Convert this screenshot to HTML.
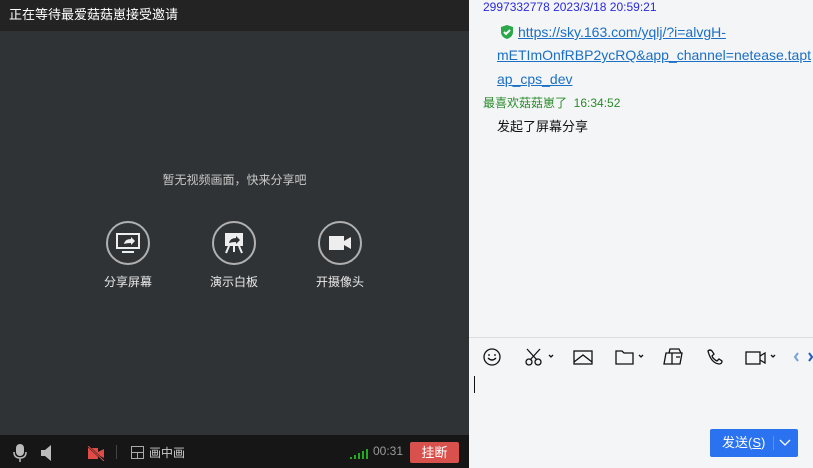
<!DOCTYPE html>
<html><head><meta charset="utf-8"><style>
*{margin:0;padding:0;box-sizing:border-box}
body{width:813px;height:468px;overflow:hidden;position:relative;font-family:"Liberation Sans","Noto Sans CJK SC",sans-serif;background:#f4f5f7}
.l{position:absolute;left:0;top:0;width:469px;height:468px;background:#303336}
.t{position:absolute;left:0;top:0;width:469px;height:31px;background:#232323;color:#fff;font-size:13px;line-height:30px;padding-left:9px}
.hint{position:absolute;top:171px;left:0;width:469px;text-align:center;color:#c8c8c8;font-size:12px}
.b{position:absolute;top:221px;width:60px;text-align:center;color:#e8e8e8;font-size:12px}
.c{width:44px;height:44px;border:2px solid #b0b0b0;border-radius:50%;margin:0 auto 8px;display:flex;align-items:center;justify-content:center}
.bot{position:absolute;left:0;top:435px;width:469px;height:33px;background:#161616;color:#ccc;font-size:12px}
.r{position:absolute;left:469px;top:0;width:344px;height:468px;font-size:13px;overflow:hidden}
a{color:#1b6fc4;text-decoration:underline}
</style></head><body>
<div class="l">
<div class="t">正在等待最爱菇菇崽接受邀请</div>
<div class="hint">暂无视频画面，快来分享吧</div>
<div class="b" style="left:98px"><div class="c"><svg width="24" height="22"><rect x="1" y="2" width="22" height="14" fill="none" stroke="#eee" stroke-width="2"/><path d="M6 20h12" stroke="#eee" stroke-width="2"/><path d="M8 12q1-5 7-5v-2l4 4-4 4v-2q-4 0-7 1z" fill="#eee"/></svg></div>分享屏幕</div>
<div class="b" style="left:204px"><div class="c"><svg width="22" height="24"><rect x="2" y="2" width="18" height="13" fill="#eee"/><path d="M6 15l-3 7M16 15l3 7M11 15v6" stroke="#eee" stroke-width="2"/><path d="M6 12q1-5 7-5v-2l4 4-4 4v-2q-4 0-7 1z" fill="#303336"/></svg></div>演示白板</div>
<div class="b" style="left:310px"><div class="c"><svg width="24" height="16"><rect x="1" y="1" width="15" height="14" fill="#eee"/><path d="M16 6l7-4v12l-7-4z" fill="#eee"/></svg></div>开摄像头</div>
<div class="bot">
<svg style="position:absolute;left:13px;top:9px" width="14" height="18"><rect x="3" y="0" width="8" height="12" rx="4" fill="#bbb"/><path d="M1 8q0 6 6 6t6-6M7 14v4" stroke="#bbb" stroke-width="1.5" fill="none"/></svg>
<svg style="position:absolute;left:41px;top:10px" width="12" height="16"><path d="M0 5h4l6-5v16l-6-5H0z" fill="#bbb"/></svg>
<svg style="position:absolute;left:87px;top:11px" width="18" height="15"><rect x="1" y="2" width="10" height="11" fill="#e04b46"/><path d="M11 6l6-3v9l-6-3z" fill="#e04b46"/><path d="M1 0l16 15" stroke="#161616" stroke-width="2"/><path d="M1 0l16 15" stroke="#e04b46" stroke-width="1"/></svg>
<div style="position:absolute;left:116px;top:10px;width:1px;height:14px;background:#444"></div>
<svg style="position:absolute;left:131px;top:11px" width="13" height="13"><rect x=".5" y=".5" width="12" height="12" fill="none" stroke="#aaa"/><path d="M.5 6.5h12M6.5 6.5v6" stroke="#aaa"/></svg>
<span style="position:absolute;left:149px;top:9px">画中画</span>
<svg style="position:absolute;left:350px;top:14px" width="18" height="10"><rect x="0" y="8" width="2" height="2" fill="#2a2"/><rect x="4" y="6" width="2" height="4" fill="#2a2"/><rect x="8" y="4" width="2" height="6" fill="#2a2"/><rect x="12" y="2" width="2" height="8" fill="#2a2"/><rect x="16" y="0" width="2" height="10" fill="#2a2"/></svg>
<span style="position:absolute;left:373px;top:9px;color:#999">00:31</span>
<div style="position:absolute;left:410px;top:7px;width:49px;height:21px;background:#d9514c;border-radius:2px;color:#fff;text-align:center;line-height:21px;font-size:13px">挂断</div>
</div>
</div>
<div class="r">
<div style="position:absolute;left:14px;top:0;color:#2a2adc;font-size:12px">2997332778 2023/3/18 20:59:21</div>
<svg style="position:absolute;left:30px;top:24px" width="16" height="16"><path d="M8 1l6 2v5q0 5-6 7-6-2-6-7V3z" fill="#2aa84a"/><path d="M5 8l2 2 4-4" stroke="#fff" stroke-width="2" fill="none"/></svg>
<div style="position:absolute;left:49px;top:24px;font-size:14px;white-space:nowrap"><a>https://sky.163.com/yqlj/?i=alvgH-</a></div>
<div style="position:absolute;left:28px;top:47px;font-size:14px;white-space:nowrap"><a>mETImOnfRBP2ycRQ&amp;app_channel=netease.tapt</a></div>
<div style="position:absolute;left:28px;top:71px;font-size:14px;white-space:nowrap"><a>ap_cps_dev</a></div>
<div style="position:absolute;left:14px;top:94px;color:#2a8a2a;font-size:12px">最喜欢菇菇崽了&nbsp; 16:34:52</div>
<div style="position:absolute;left:28px;top:116px;color:#111">发起了屏幕分享</div>
<div style="position:absolute;left:0;top:337px;width:344px;height:1px;background:#dcdde0"></div>
<svg style="position:absolute;left:0;top:345px" width="344" height="24" fill="none" stroke="#111" stroke-width="1.3">
<circle cx="23" cy="12" r="8"/><path d="M19 13q4 4 8 0M19 10h2M25 10h2"/>
<circle cx="60" cy="17" r="3"/><circle cx="69" cy="17" r="3"/><path d="M58 4l10 11M71 4L61 15"/><path d="M80 10l2 2 2-2"/>
<rect x="105" y="6" width="18" height="13"/><path d="M105 17l9-7 9 7"/>
<path d="M147 6h6l2 2h9v11h-17z"/><path d="M170 10l2 2 2-2"/>
<path d="M197 8h16l-2 11h-16zM200 8l1-4h9l2 4M203 8v11M207 12h4"/>
<path d="M239 6q2-2 4 0l2 3-2 2q1 3 5 5l2-2 3 2q0 3-3 3-8-1-11-13z"/>
<rect x="277" y="7" width="14" height="12"/><path d="M291 11l5-3v10l-5-3"/><path d="M302 10l2 2 2-2"/>
<path d="M329 8l-3 4 3 4" stroke="#7aa0d8" stroke-width="2"/><path d="M340 8l3 4-3 4" stroke="#1b5fc4" stroke-width="2"/>
</svg>
<div style="position:absolute;left:5px;top:376px;width:1px;height:17px;background:#111"></div>
<div style="position:absolute;left:241px;top:429px;width:88px;height:28px;background:#2a72f0;border-radius:2px;color:#fff;font-size:13px;line-height:28px"><span style="padding-left:12px">发送(<u>S</u>)</span><span style="position:absolute;left:63px;top:7px;width:1px;height:14px;background:#5b92f4"></span><svg style="position:absolute;left:69px;top:10px" width="12" height="8"><path d="M1 1l5 5 5-5" stroke="#fff" fill="none" stroke-width="1.3"/></svg></div>
</div>
</body></html>
